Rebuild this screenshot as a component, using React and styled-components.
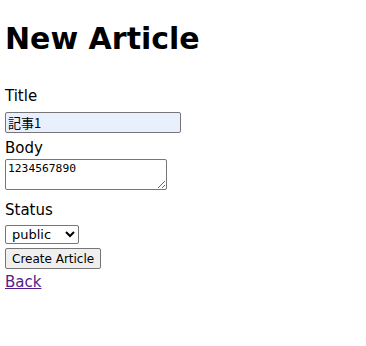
import React from "react";
import styled, { createGlobalStyle } from "styled-components";

const Global = createGlobalStyle`
	body {
		margin: 0;
		background: #fff;
		font-family: "DejaVu Sans", "Noto Sans CJK JP", sans-serif;
		color: #000;
	}
`;

const Page = styled.div`
	padding: 0 5px;
	display: flex;
	flex-direction: column;
	align-items: flex-start;
`;

const Heading = styled.h1`
	margin: 19px 0 27px;
	font-size: 30px;
	line-height: 40px;
	font-weight: bold;
`;

const Field = styled.div`
	display: flex;
	flex-direction: column;
	align-items: flex-start;
	margin-bottom: ${(p) => p.gap || 0}px;
`;

const Label = styled.label`
	font-size: 15px;
	line-height: 20px;
	margin-bottom: ${(p) => p.gap || 0}px;
`;

const TextInput = styled.input`
	box-sizing: border-box;
	width: 176px;
	height: 21px;
	margin: 0;
	padding: 1px 2px;
	border: 1px solid #767676;
	border-radius: 2px;
	background: #e8f0fe;
	font-family: "Noto Sans CJK JP", "DejaVu Sans", sans-serif;
	font-size: 13px;
	color: #000;
`;

const TextArea = styled.textarea`
	box-sizing: border-box;
	width: 162px;
	height: 31px;
	margin: 0;
	padding: 2px;
	border: 1px solid #767676;
	border-radius: 2px;
	font-family: "DejaVu Sans Mono", monospace;
	font-size: 11.3px;
	line-height: 13px;
	color: #000;
`;

const Select = styled.select`
	box-sizing: border-box;
	width: 74px;
	height: 19px;
	margin: 0;
	padding: 0 2px;
	border: 1px solid #767676;
	border-radius: 2px;
	background: #fff;
	font-family: "DejaVu Sans", sans-serif;
	font-size: 13px;
	color: #000;
`;

const Button = styled.button`
	box-sizing: border-box;
	height: 21px;
	margin: 4px 0 3px;
	padding: 0 6px;
	border: 1px solid #767676;
	border-radius: 2px;
	background: #efefef;
	font-family: "DejaVu Sans", sans-serif;
	font-size: 12px;
	color: #000;
`;

const BackLink = styled.a`
	font-size: 15px;
	line-height: 20px;
	color: #551a8b;
	text-decoration: underline;
`;

export default function App() {
	return (
		<>
			<Global />
			<Page>
				<Heading>New Article</Heading>
				<Field gap={5}>
					<Label htmlFor="title" gap={6}>Title</Label>
					<TextInput id="title" defaultValue="記事1" />
				</Field>
				<Field gap={10}>
					<Label htmlFor="body" gap={1}>Body</Label>
					<TextArea id="body" defaultValue="1234567890" />
				</Field>
				<Field>
					<Label htmlFor="status" gap={5}>Status</Label>
					<Select id="status" defaultValue="public">
						<option value="public">public</option>
						<option value="private">private</option>
					</Select>
				</Field>
				<Button type="button">Create Article</Button>
				<BackLink href="#">Back</BackLink>
			</Page>
		</>
	);
}
